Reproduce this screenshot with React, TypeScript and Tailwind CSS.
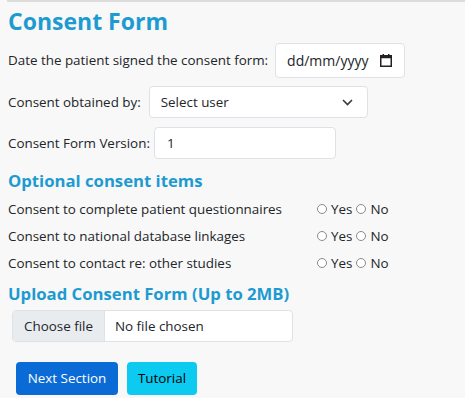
import React from "react";

const Radio = () => (
  <span className="inline-block w-[10px] h-[10px] rounded-full border border-[#8a8a8a] bg-white" />
);

const ConsentRow = ({ label }: { label: string }) => (
  <div className="flex items-center h-[27px]">
    <div className="w-[309px]">{label}</div>
    <div className="flex items-center">
      <Radio />
      <span className="ml-[4px] mr-[4px]">Yes</span>
      <Radio />
      <span className="ml-[4px]">No</span>
    </div>
  </div>
);

export default function App() {
  return (
    <div
      className="w-[465px] h-[398px] bg-[#f8f8f8] text-[#212529] text-[13.4px] overflow-hidden"
      style={{ fontFamily: '"Open Sans", "Noto Sans", sans-serif' }}
    >
      <div className="ml-[7px] border-t-2 border-[#dcdcdc]" />
      <div className="pl-[8px] pt-[3px]">
        <h1 className="text-[23px] font-bold text-[#1d9bd1] leading-[32px]">Consent Form</h1>
        <div className="flex items-center mt-[6px] h-[35px]">
          <span>Date the patient signed the consent form:</span>
          <div className="ml-[7px] w-[130px] h-[35px] bg-white border border-[#dee2e6] rounded-[4px] flex items-center pl-[11px] pr-[12px] justify-between">
            <span className="text-[14px]">dd/mm/yyyy</span>
            <svg width="12" height="13" viewBox="0 0 12 13">
              <rect x="0.75" y="1.75" width="10.5" height="10.5" fill="none" stroke="#222" strokeWidth="1.5" />
              <rect x="0.75" y="1.75" width="10.5" height="2.5" fill="#222" />
              <rect x="2.5" y="0" width="1.5" height="2" fill="#222" />
              <rect x="8" y="0" width="1.5" height="2" fill="#222" />
            </svg>
          </div>
        </div>
        <div className="flex items-center mt-[8px] h-[32px]">
          <span>Consent obtained by:</span>
          <div className="ml-[8px] w-[219px] h-[32px] bg-white border border-[#dee2e6] rounded-[4px] flex items-center pl-[11px] pr-[14px] justify-between">
            <span>Select user</span>
            <svg width="11" height="7" viewBox="0 0 11 7">
              <path d="M1 1l4.5 4.5L10 1" fill="none" stroke="#343a40" strokeWidth="1.6" />
            </svg>
          </div>
        </div>
        <div className="flex items-center mt-[9px] h-[32px]">
          <span>Consent Form Version:</span>
          <div className="ml-[4px] w-[182px] h-[32px] bg-white border border-[#dee2e6] rounded-[4px] flex items-center pl-[12px]">
            <span>1</span>
          </div>
        </div>
        <h2 className="text-[16.7px] font-bold text-[#1d9bd1] leading-[22px] mt-[11px]">Optional consent items</h2>
        <div className="mt-[4px]">
          <ConsentRow label="Consent to complete patient questionnaires" />
          <ConsentRow label="Consent to national database linkages" />
          <ConsentRow label="Consent to contact re: other studies" />
        </div>
        <h2 className="text-[16.7px] font-bold text-[#1d9bd1] leading-[22px] mt-[6px]">Upload Consent Form (Up to 2MB)</h2>
        <div className="ml-[4px] mt-[5px] w-[281px] h-[32px] bg-white border border-[#dee2e6] rounded-[4px] flex items-stretch overflow-hidden">
          <div className="w-[92px] bg-[#e9ecef] border-r border-[#dee2e6] flex items-center justify-center">Choose file</div>
          <div className="flex items-center pl-[10px]">No file chosen</div>
        </div>
        <div className="flex gap-[9px] ml-[8px] mt-[20px]">
          <button className="w-[102px] h-[33px] bg-[#0b6bd6] text-white rounded-[4px]">Next Section</button>
          <button className="w-[70px] h-[33px] bg-[#0dcaf0] text-black rounded-[4px]">Tutorial</button>
        </div>
      </div>
    </div>
  );
}
